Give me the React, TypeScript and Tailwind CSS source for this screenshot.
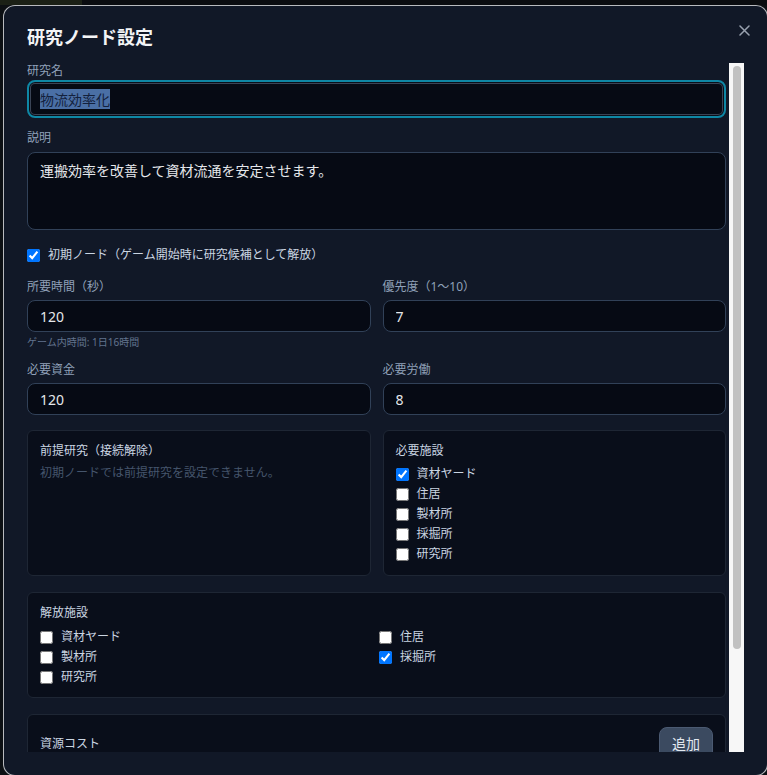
import { useEffect, useRef } from "react"

const facilities = ["資材ヤード", "住居", "製材所", "採掘所", "研究所"]

function FieldLabel({ children }: { children: React.ReactNode }) {
  return (
    <label className="block text-xs leading-4 text-slate-400 mb-[5px]">
      {children}
    </label>
  )
}

function Check({ label, checked }: { label: string; checked?: boolean }) {
  return (
    <label className="flex h-5 items-center gap-2 text-xs text-slate-300">
      <input type="checkbox" defaultChecked={checked} className="m-0 h-[13px] w-[13px]" />
      <span>{label}</span>
    </label>
  )
}

const inputCls =
  "block w-full h-8 rounded-lg border border-slate-700 bg-[#060a14] px-3 text-sm text-gray-200 outline-none"

export default function App() {
  const nameRef = useRef<HTMLInputElement>(null)

  useEffect(() => {
    // the name field is focused with its text selected when the dialog opens
    nameRef.current?.focus()
    nameRef.current?.select()
  }, [])

  return (
    <div className="h-[775px] w-[767px] overflow-hidden bg-[#0c0f13] font-['Noto_Sans','Noto_Sans_CJK_JP',sans-serif]">
      {/* strip of the page showing above the dialog */}
      <div className="flex h-[5px]">
        <div className="w-[82px] bg-[#1b2016]" />
        <div className="flex-1 bg-[#0a0c10]" />
      </div>

      <div className="relative ml-[3px] flex h-[771px] w-[765px] flex-col rounded-xl border border-white/70 bg-[#111827] px-[23px] pt-[17px] pb-[23px]">
        <button className="absolute right-[17px] top-[18px] flex h-3 w-3 items-center justify-center text-gray-400">
          <svg width="11" height="11" viewBox="0 0 11 11" fill="none" stroke="currentColor" strokeWidth="1.5" strokeLinecap="round">
            <path d="M1 1l9 9M10 1l-9 9" />
          </svg>
        </button>

        <h2 className="text-lg font-bold leading-7 text-gray-100">研究ノード設定</h2>

        <div className="mt-3 flex min-h-0 flex-1">
          <div className="min-w-0 flex-1 overflow-hidden pr-[3px]">
            {/* name */}
            <label className="block text-xs leading-4 text-slate-400 mb-px">研究名</label>
            <input
              ref={nameRef}
              defaultValue="物流効率化"
              className="block h-[38px] w-full rounded-lg border-2 border-[#0e87a5] bg-[#060a14] px-[11px] text-sm text-gray-200 outline-none shadow-[inset_0_0_0_1px_#0b0f19,inset_0_0_0_2px_#3a4456] selection:bg-[#4a6fa5] selection:text-[#13213d]"
            />

            {/* description */}
            <div className="mt-3">
              <label className="block text-xs leading-4 text-slate-400 mb-1.5">説明</label>
              <textarea
                defaultValue="運搬効率を改善して資材流通を安定させます。"
                className="block h-[78px] w-full resize-none rounded-lg border border-slate-700 bg-[#060a14] px-3 py-2 text-sm leading-5 text-gray-200 outline-none"
              />
            </div>

            <div className="mt-[15px]">
              <Check label="初期ノード（ゲーム開始時に研究候補として解放）" checked />
            </div>

            <div className="mt-[14px] grid grid-cols-2 gap-x-3">
              <div>
                <FieldLabel>所要時間（秒）</FieldLabel>
                <input defaultValue="120" className={inputCls} />
                <p className="mt-[3px] text-[10px] leading-[14px] text-slate-500">ゲーム内時間: 1日16時間</p>
              </div>
              <div>
                <FieldLabel>優先度（1〜10）</FieldLabel>
                <input defaultValue="7" className={inputCls} />
              </div>
            </div>

            <div className="mt-[13px] grid grid-cols-2 gap-x-3">
              <div>
                <FieldLabel>必要資金</FieldLabel>
                <input defaultValue="120" className={inputCls} />
              </div>
              <div>
                <FieldLabel>必要労働</FieldLabel>
                <input defaultValue="8" className={inputCls} />
              </div>
            </div>

            <div className="mt-[15px] grid grid-cols-2 gap-x-3">
              <div className="rounded-md border border-[#1e2634] bg-[#090e1a] px-3 pt-3 pb-[11px]">
                <p className="text-xs leading-4 text-slate-300">前提研究（接続解除）</p>
                <p className="mt-1.5 text-xs leading-4 text-slate-600">初期ノードでは前提研究を設定できません。</p>
              </div>
              <div className="rounded-md border border-[#1e2634] bg-[#090e1a] px-3 pt-3 pb-[11px]">
                <p className="text-xs leading-4 text-slate-300">必要施設</p>
                <div className="mt-[5px] flex flex-col">
                  {facilities.map((f) => (
                    <Check key={f} label={f} checked={f === "資材ヤード"} />
                  ))}
                </div>
              </div>
            </div>

            <div className="mt-4 rounded-md border border-[#1e2634] bg-[#090e1a] px-3 pt-3 pb-[10px]">
              <p className="text-xs leading-4 text-slate-300">解放施設</p>
              <div className="mt-[6px] grid grid-cols-2 gap-x-[5px]">
                {facilities.map((f) => (
                  <Check key={f} label={f} checked={f === "採掘所"} />
                ))}
              </div>
            </div>

            <div className="mt-4 min-h-[164px] rounded-md border border-[#1e2634] bg-[#090e1a] p-3">
              <div className="flex items-center justify-between">
                <p className="text-xs leading-4 text-slate-300">資源コスト</p>
                <button className="h-[34px] rounded-lg border border-[#4b5a72] bg-[#3b4a60] px-3 text-sm text-slate-200">
                  追加
                </button>
              </div>
            </div>
          </div>

          {/* scrollbar */}
          <div className="flex w-[15px] shrink-0 justify-center bg-[#f7f7f7] pt-[3px]">
            <div className="h-[583px] w-2 rounded-full bg-[#c1c1c1]" />
          </div>
        </div>
      </div>
    </div>
  )
}
